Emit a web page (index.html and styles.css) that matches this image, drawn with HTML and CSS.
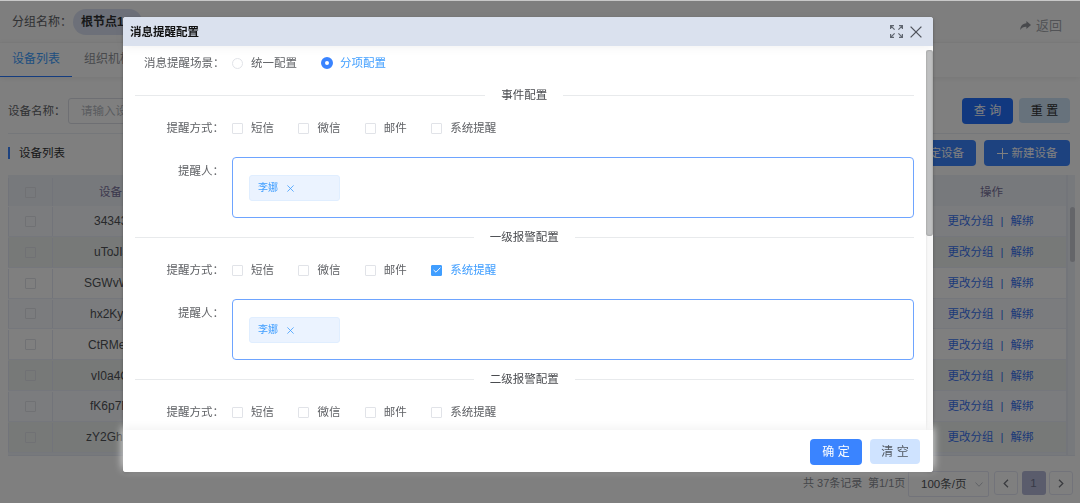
FILE: index.html
```html
<!DOCTYPE html>
<html lang="zh-CN">
<head>
    <meta charset="UTF-8">
    <meta name="viewport" content="width=device-width, initial-scale=1.0">
    <title>消息提醒配置</title>
    <link rel="stylesheet" href="styles.css">
</head>
<body>
    <div class="page">
        <div class="group-bar">
            <span class="group-label">分组名称：</span>
            <span class="group-pill">根节点1</span>
            <span class="back">
                <svg width="11" height="10" viewBox="0 0 11 10"><path d="M6.4 0 11 4 6.4 8V5.7C3.6 5.6 1.8 6.3.3 9 .4 5.200 2.400 2.700 6.400 2.300Z" fill="#909399"/></svg>
                返回
            </span>
        </div>
        <div class="tabs">
            <span class="tab active">设备列表</span>
            <span class="tab">组织机构</span>
        </div>
        <div class="search">
            <span class="search-label">设备名称：</span>
            <div class="search-input">请输入设</div>
            <button class="btn btn-query">查 询</button>
            <button class="btn btn-reset">重 置</button>
        </div>
        <div class="list-head">
            <span class="list-title">设备列表</span>
            <button class="btn btn-bind">绑定设备</button>
            <button class="btn btn-add">
                <svg width="11" height="11" viewBox="0 0 11 11"><path d="M5.500 0V11M0 5.500H11" stroke="#fff" stroke-width="1"/></svg>
                新建设备
            </button>
        </div>
        <div class="table">
            <div class="table-main">
                <div class="row row-head"><div class="cell-check"><i class="check"></i></div><div class="cell-name">设备</div><div class="cell-action">操作</div></div>
                <div class="row blue"><div class="cell-check"><i class="check"></i></div><div class="cell-name">34343</div><div class="cell-action"><a>更改分组</a><b>|</b><a>解绑</a></div></div>
                <div class="row green"><div class="cell-check"><i class="check"></i></div><div class="cell-name">uToJIJ</div><div class="cell-action"><a>更改分组</a><b>|</b><a>解绑</a></div></div>
                <div class="row"><div class="cell-check"><i class="check"></i></div><div class="cell-name">SGWvW</div><div class="cell-action"><a>更改分组</a><b>|</b><a>解绑</a></div></div>
                <div class="row blue"><div class="cell-check"><i class="check"></i></div><div class="cell-name">hx2Ky</div><div class="cell-action"><a>更改分组</a><b>|</b><a>解绑</a></div></div>
                <div class="row"><div class="cell-check"><i class="check"></i></div><div class="cell-name">CtRMe</div><div class="cell-action"><a>更改分组</a><b>|</b><a>解绑</a></div></div>
                <div class="row green"><div class="cell-check"><i class="check"></i></div><div class="cell-name">vI0a4C</div><div class="cell-action"><a>更改分组</a><b>|</b><a>解绑</a></div></div>
                <div class="row blue"><div class="cell-check"><i class="check"></i></div><div class="cell-name">fK6p7F</div><div class="cell-action"><a>更改分组</a><b>|</b><a>解绑</a></div></div>
                <div class="row green"><div class="cell-check"><i class="check"></i></div><div class="cell-name">zY2GhH</div><div class="cell-action"><a>更改分组</a><b>|</b><a>解绑</a></div></div>
            </div>
            <div class="table-scroll"><div class="table-thumb"></div></div>
        </div>
        <div class="pager">
            <span class="pager-total">共 37条记录</span>
            <span class="pager-pages">第1/1页</span>
            <div class="pager-size">100条/页
                <svg width="8" height="5" viewBox="0 0 8 5"><path d="M.5.5 4 4.300 7.500.5" fill="none" stroke="#c0c4cc"/></svg>
            </div>
            <div class="pager-btn"><svg width="6" height="9" viewBox="0 0 6 9"><path d="M5 .7 1.200 4.500 5 8.300" fill="none" stroke="#74777e" stroke-width="1.300"/></svg></div>
            <div class="pager-btn current">1</div>
            <div class="pager-btn"><svg width="6" height="9" viewBox="0 0 6 9"><path d="M1 .7 4.800 4.500 1 8.300" fill="none" stroke="#74777e" stroke-width="1.300"/></svg></div>
        </div>
    </div>

    <div class="mask"></div>

    <div class="dialog">
        <div class="dialog-header">
            <span class="dialog-title">消息提醒配置</span>
            <svg width="13" height="13" viewBox="0 0 13 13"><path d="M.6 4V.6H4M.6.6 4.600 4.600M9 .6h3.400V4M12.400.6 8.400 4.600M.6 9v3.400H4M.6 12.400l4-4M9 12.400h3.400V9M12.400 12.400l-4-4" fill="none" stroke="#606670" stroke-width="1.200"/></svg>
            <svg width="12" height="12" viewBox="0 0 12 12"><path d="M.6.6 11.400 11.400M11.400.6.6 11.400" stroke="#50545c" stroke-width="1.300"/></svg>
        </div>
        <div class="dialog-body">
            <div class="form">
                <div class="scene">
                    <span class="scene-label">消息提醒场景：</span>
                    <span class="option"><i class="radio"></i>统一配置</span>
                    <span class="option on"><i class="radio"></i>分项配置</span>
                </div>

                <div class="divider">事件配置</div>
                <div class="methods">
                    <span class="label">提醒方式：</span>
                    <span class="option"><i class="check"></i>短信</span>
                    <span class="option"><i class="check"></i>微信</span>
                    <span class="option"><i class="check"></i>邮件</span>
                    <span class="option"><i class="check"></i>系统提醒</span>
                </div>
                <div class="people">
                    <span class="label">提醒人：</span>
                    <div class="people-box"><span class="tag">李娜<svg width="7" height="7" viewBox="0 0 7 7"><path d="M.4.4 6.600 6.600M6.600.4.4 6.600" stroke="#409eff" stroke-width=".8"/></svg></span></div>
                </div>

                <div class="divider">一级报警配置</div>
                <div class="methods">
                    <span class="label">提醒方式：</span>
                    <span class="option"><i class="check"></i>短信</span>
                    <span class="option"><i class="check"></i>微信</span>
                    <span class="option"><i class="check"></i>邮件</span>
                    <span class="option on"><i class="check"><svg width="8" height="6" viewBox="0 0 8 6"><path d="M.6 3 3 5.200 7.400.6" fill="none" stroke="#fff" stroke-width=".9"/></svg></i>系统提醒</span>
                </div>
                <div class="people">
                    <span class="label">提醒人：</span>
                    <div class="people-box"><span class="tag">李娜<svg width="7" height="7" viewBox="0 0 7 7"><path d="M.4.4 6.600 6.600M6.600.4.4 6.600" stroke="#409eff" stroke-width=".8"/></svg></span></div>
                </div>

                <div class="divider">二级报警配置</div>
                <div class="methods">
                    <span class="label">提醒方式：</span>
                    <span class="option"><i class="check"></i>短信</span>
                    <span class="option"><i class="check"></i>微信</span>
                    <span class="option"><i class="check"></i>邮件</span>
                    <span class="option"><i class="check"></i>系统提醒</span>
                </div>
            </div>
            <div class="scrollbar"><div class="thumb"></div></div>
        </div>
        <div class="dialog-footer">
            <button class="btn btn-ok">确 定</button>
            <button class="btn btn-clear">清 空</button>
        </div>
    </div>
</body>
</html>
```
FILE: styles.css
```css
* {
    box-sizing: border-box;
}
body {
    margin: 0;
    height: 503px;
    overflow: hidden;
    font-family: "Liberation Sans", "Noto Sans CJK SC", sans-serif;
    font-size: 11.5px;
    line-height: 16px;
    color: #606266;
    background: #fff;
}
svg {
    display: block;
    flex: none;
}
i, b {
    font-style: normal;
    font-weight: normal;
}
.page {
    height: 503px;
    padding-top: 1px;
    overflow: hidden;
}

/* top bars */
.group-bar {
    display: flex;
    align-items: center;
    height: 42px;
    padding: 1px 18px 0 12px;
    background: #fcfcfc;
    border-bottom: 1px solid #f8f8f8;
    font-size: 12px;
}
.group-label {
    width: 61px;
    white-space: nowrap;
}
.group-pill {
    width: 69px;
    height: 26px;
    padding-left: 8px;
    border-radius: 13px;
    background: #dae1f3;
    color: #303133;
    font-weight: bold;
    line-height: 26px;
}
.back {
    display: flex;
    align-items: center;
    gap: 5px;
    margin: 8px 0 0 auto;
    font-size: 13px;
    color: #a4a7ac;
}
.tabs {
    display: flex;
    height: 34px;
    box-shadow: 0 1px 6px rgba(0, 0, 0, 0.08);
}
.tab {
    width: 72px;
    line-height: 33px;
    text-align: center;
    font-size: 12px;
    color: #909399;
}
.tab.active {
    color: #409eff;
    box-shadow: inset 0 -1px #2879ff;
}

.btn {
    height: 26px;
    padding: 0;
    border: 0;
    border-radius: 4px;
    font: inherit;
    color: #fff;
    background: #3a84ff;
}
.search {
    display: flex;
    align-items: center;
    height: 57px;
    margin: 0 10px 0 8px;
    padding-top: 11px;
    border-bottom: 1px solid #ebeef5;
}
.search-label {
    width: 60px;
}
.search-input {
    width: 140px;
    height: 26px;
    padding-left: 12px;
    border: 1px solid #dcdfe6;
    border-radius: 3px;
    line-height: 25px;
    color: #b4b8c0;
}
.search .btn {
    font-size: 12px;
}
.btn-query {
    width: 51px;
    margin-left: auto;
    background: #2271ff;
}
.search .btn-reset {
    width: 51px;
    height: 25px;
    margin-left: 6px;
    background: #cfe4f9;
    color: #303133;
}
.list-head {
    display: flex;
    align-items: center;
    height: 38px;
    margin: 0 10px 0 8px;
}
.list-title {
    margin-right: auto;
    padding-left: 9px;
    border-left: 2px solid #3a84ff;
    line-height: 12px;
    color: #303133;
}
.btn-bind {
    width: 70px;
}
.btn-add {
    display: flex;
    align-items: center;
    justify-content: center;
    gap: 4px;
    width: 86px;
    margin-left: 8px;
}

/* device table */
.table {
    display: flex;
    height: 281px;
    margin: 3px 5px 0 8px;
    background: #eff2f9;
    border-bottom: 1px solid #e6eaf4;
}
.table-main {
    flex: 1;
}
.row {
    display: flex;
    align-items: center;
    height: 30.85px;
    padding-top: 1px;
    background: #fff;
    border-bottom: 1px solid #ebeef9;
}
.row-head {
    height: 31px;
    padding-top: 3px;
    background: #eff2f9;
    color: #77709a;
    border: 0;
}
.row.blue {
    background: #f6f8fc;
}
.row.green {
    background: #eef2f1;
}
.cell-check {
    display: flex;
    align-items: center;
    justify-content: center;
    width: 45px;
    height: 100%;
    border-right: 1px solid #e4e8f4;
    border-left: 1px solid #e4e8f4;
}
.check {
    display: flex;
    align-items: center;
    justify-content: center;
    width: 11px;
    height: 11px;
    border: 1px solid #e1e3e8;
    border-radius: 1px;
    background: #fff;
}
.table .check {
    background: transparent;
}
.cell-name {
    width: 120px;
    padding-left: 37px;
    font-size: 12px;
    color: #505357;
}
.row-head .cell-name {
    padding-left: 46px;
    font-size: 11.5px;
    color: inherit;
}
.row:nth-child(2) .cell-name {
    padding-left: 41px;
}
.row:nth-child(3) .cell-name {
    padding-left: 41px;
}
.row:nth-child(4) .cell-name {
    padding-left: 31px;
}
.row:nth-child(6) .cell-name {
    padding-left: 35px;
}
.row:nth-child(7) .cell-name {
    padding-left: 38px;
}
.row:nth-child(9) .cell-name {
    padding-left: 33px;
}
.cell-action {
    display: flex;
    justify-content: center;
    gap: 7px;
    width: 149px;
    margin-right: 1px;
    margin-left: auto;
    color: #3a74f2;
}
.row-head .cell-action {
    margin-right: 0;
    color: inherit;
}
.table-scroll {
    width: 9px;
    padding: 32px 2px 0;
    border-left: 2px solid #e6eaf4;
}
.table-thumb {
    width: 5px;
    height: 55px;
    border-radius: 3px;
    background: #c8cad2;
}

/* pagination */
.pager {
    display: flex;
    height: 47px;
    padding: 15px 7px 0 0;
    justify-content: flex-end;
    color: #8b8e94;
}
.pager-total {
    width: 65px;
    font-size: 11px;
    line-height: 24px;
}
.pager-pages {
    width: 40px;
    font-size: 11px;
    line-height: 24px;
    white-space: nowrap;
}
.pager-size {
    display: flex;
    align-items: center;
    justify-content: space-between;
    width: 81px;
    height: 26px;
    margin-right: 5px;
    padding: 0 5px 0 12px;
    border: 1px solid #e4e7f4;
    border-radius: 2px;
    color: #505357;
}
.pager-btn {
    display: flex;
    align-items: center;
    justify-content: center;
    width: 24px;
    height: 24px;
    margin-right: 3.5px;
    border: 1px solid #e4e7f4;
    border-radius: 3px;
}
.pager-btn:last-child {
    margin-right: 0;
}
.pager-btn.current {
    border: 0;
    background: #b4b9d8;
    color: #707490;
}

.mask {
    position: fixed;
    inset: 1px 0 0;
    background: rgba(0, 0, 0, 0.5);
    box-shadow: 0 -1px #c8c8c8;
}

/* dialog */
.dialog {
    position: absolute;
    top: 17px;
    left: 123px;
    display: flex;
    flex-direction: column;
    width: 810px;
    height: 455px;
    border-radius: 3px;
    background: #fff;
    box-shadow: 0 1px 3px rgba(0, 0, 0, 0.3);
}
.dialog-header {
    display: flex;
    align-items: center;
    gap: 7px;
    height: 29px;
    padding: 0 11px 0 7px;
    border-radius: 3px 3px 0 0;
    background: #dae1ee;
    box-shadow: 0 2px 10px rgba(0, 0, 0, 0.05);
}
.dialog-title {
    margin-right: auto;
    font-weight: bold;
    color: #111;
}
.dialog-body {
    display: flex;
    height: 384px;
    padding-top: 4px;
}
.form {
    flex: 1;
    padding: 0 12.5px 0 12px;
}
.scene,
.methods {
    display: flex;
    align-items: center;
    height: 26px;
}
.scene-label {
    width: 88px;
    margin-left: 9px;
}
.scene .option {
    width: 89px;
}
.label {
    width: 89px;
    margin-right: 8px;
    text-align: right;
}
.option {
    display: flex;
    align-items: center;
    width: 66.4px;
    gap: 8px;
    white-space: nowrap;
}
.option.on {
    color: #409eff;
}
.option.on .check {
    border-color: #409eff;
    background: #409eff;
}
.radio {
    width: 11px;
    height: 11px;
    border: 1px solid #e1e3e8;
    border-radius: 50%;
}
.on .radio {
    width: 12px;
    height: 12px;
    margin-right: -1px;
    border: 4px solid #3a84ff;
}
.divider {
    display: flex;
    align-items: center;
    height: 16px;
    margin-top: 11px;
    color: #4a4c50;
}
.divider::before,
.divider::after {
    content: "";
    flex: 1;
    height: 1px;
    background: #e8eaec;
}
.divider::before {
    margin-right: 16px;
}
.divider::after {
    margin-left: 16px;
}
.methods {
    margin-top: 12px;
}
.people {
    display: flex;
    height: 61px;
    margin-top: 16px;
}
.people .label {
    padding-top: 6px;
}
.people-box {
    flex: 1;
    padding: 17px 16px;
    border: 1px solid #6ea4ff;
    border-radius: 4px;
}
.tag {
    display: flex;
    align-items: center;
    gap: 9px;
    width: 91px;
    height: 26px;
    padding-left: 8px;
    border: 1px solid #e0eeff;
    border-radius: 3px;
    background: #ebf3ff;
    color: #409eff;
    font-size: 10px;
}
.scrollbar {
    width: 7px;
    background: #f8f8f8;
    box-shadow: inset 1px 0 2px rgba(0, 0, 0, 0.06);
}
.thumb {
    height: 186px;
    border-radius: 3px;
    background: #bfc0c1;
    box-shadow: inset 0 0 2px rgba(0, 0, 0, 0.3);
}
.dialog-footer {
    display: flex;
    align-items: center;
    justify-content: flex-end;
    gap: 8px;
    height: 42px;
    padding: 1px 13px 0 0;
    border-radius: 0 0 3px 3px;
    background: #fff;
    box-shadow: 0 -3px 8px #f4f4f4;
}
.dialog-footer .btn {
    font-size: 12px;
}
.btn-ok {
    width: 52px;
}
.dialog-footer .btn-clear {
    width: 50px;
    height: 25px;
    background: #cfe3ff;
    color: #505760;
}
```
